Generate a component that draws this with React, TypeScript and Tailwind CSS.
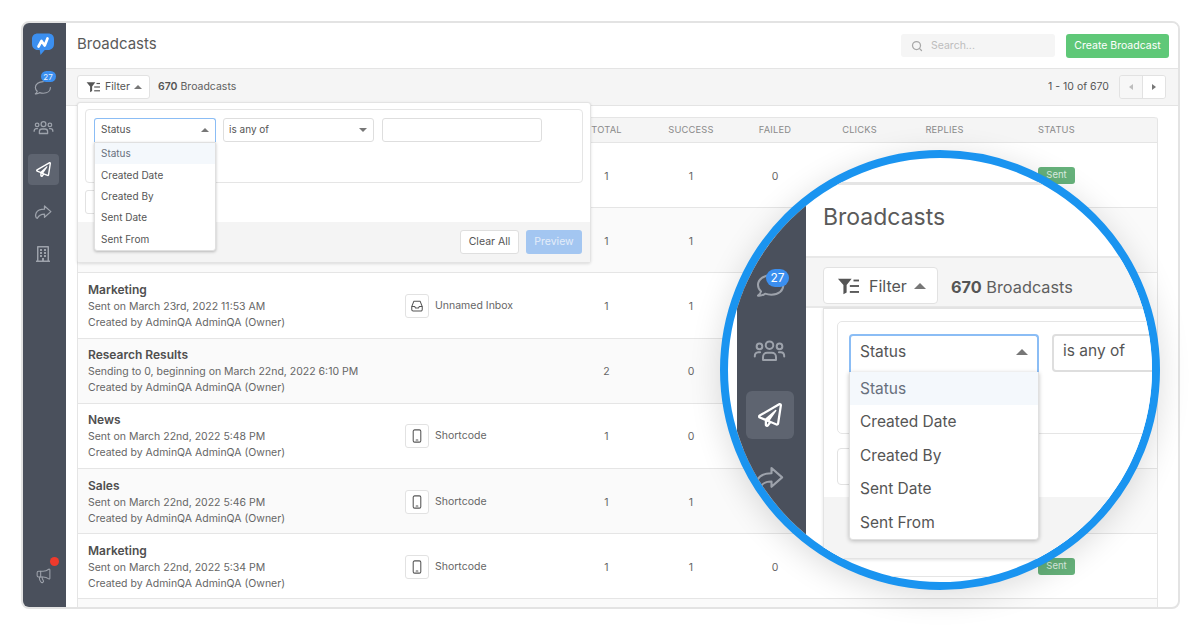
import React from "react";
import { FaRegPaperPlane, FaRegBuilding } from "react-icons/fa";
import { Megaphone, Search } from "lucide-react";

type P = { s: number; c?: string };

const Logo = ({ s }: P) => (
  <svg width={s} height={s} viewBox="0 0 24 24">
    <path d="M7 1.500h10c3.800 0 6 2.200 6 5.500v5c0 3.600-2.400 6-6 6h-3.200L9.500 23l-.8-5H7c-3.600 0-6-2.400-6-6V7c0-3.300 2.200-5.500 6-5.500z" fill="#3b8ff0" />
    <path d="M7.500 14.500L10.500 9l3.200 4.500L16.500 6.500" fill="none" stroke="#fff" strokeWidth="2.700" strokeLinecap="round" strokeLinejoin="round" />
  </svg>
);
const Chat = ({ s, c = "#9da2ab" }: P) => (
  <svg width={s} height={s} viewBox="0 0 24 24" fill="none" stroke={c} strokeWidth="1.500" strokeLinecap="round" strokeLinejoin="round">
    <path d="M13 4.500C7.500 4.500 3 7.800 3 12c0 1.900.9 3.500 2.300 4.800-.3 1.300-1.200 2.500-2.300 3.200 2 .2 4-.4 5.300-1.500 1.400.5 3 .8 4.700.8 5.500 0 9-3 9-7.300" />
  </svg>
);
const Users = ({ s, c = "#9da2ab" }: P) => (
  <svg width={s} height={s} viewBox="0 0 28 24" fill="none" stroke={c} strokeWidth="1.700" strokeLinecap="round" strokeLinejoin="round">
    <circle cx="14" cy="7.500" r="3.200" />
    <circle cx="5.500" cy="8.500" r="2.400" />
    <circle cx="22.500" cy="8.500" r="2.400" />
    <path d="M8.500 20v-2.500c0-2 1.500-3.500 3.500-3.500h4c2 0 3.500 1.500 3.500 3.500V20z" />
    <path d="M6 13.500H4.500C2.500 13.500 1.500 15 1.500 17M22 13.500h1.500c2 0 3 1.500 3 3.500" />
  </svg>
);
const Share = ({ s, c = "#9da2ab" }: P) => (
  <svg width={s} height={s} viewBox="0 0 24 24" fill="none" stroke={c} strokeWidth="1.700" strokeLinecap="round" strokeLinejoin="round">
    <path d="M14 4l8.500 7.500L14 19v-4.200c-4.500 0-7.500 1-9.500 5.700C2 20 1.500 16.500 3 13c1.800-3.500 6-4.800 11-4.800z" />
  </svg>
);
const FilterIcon = ({ s, c = "#555" }: P) => (
  <svg width={s} height={s} viewBox="0 0 24 20" fill={c}>
    <path d="M1 2h15l-5.500 7v8L7 19V9z" />
    <rect x="18" y="3" width="6" height="2" />
    <rect x="14" y="9" width="10" height="2" />
    <rect x="14" y="15.500" width="10" height="2" />
  </svg>
);
const Inbox = ({ s }: P) => (
  <svg width={s} height={s} viewBox="0 0 24 24" fill="none" stroke="#555" strokeWidth="1.800" strokeLinejoin="round">
    <path d="M6.500 4h11L21 13v5a2.500 2.500 0 0 1-2.500 2.500h-13A2.500 2.500 0 0 1 3 18v-5z" />
    <path d="M3 13h5l1.500 2.500h5L16 13h5" />
  </svg>
);
const Mobile = ({ s }: P) => (
  <svg width={s} height={s} viewBox="0 0 24 24" fill="none" stroke="#555" strokeWidth="1.800">
    <rect x="5.500" y="1.500" width="13" height="21" rx="2.500" />
    <path d="M10.500 19h3" strokeLinecap="round" />
  </svg>
);
const Up = ({ w = "border-x-[4px] border-b-[4px]" }: { w?: string }) => (
  <span className={`inline-block w-0 h-0 border-x-transparent border-b-[#777777] ${w}`} />
);
const Down = () => (
  <span className="inline-block w-0 h-0 border-x-[4px] border-x-transparent border-t-[4px] border-t-[#777777]" />
);

type Row = { name: string; l1: string; l2: string; ch?: "inbox" | "mobile"; chName?: string; t: string; s: string; f?: string; sent?: boolean };
const by = "Created by AdminQA AdminQA (Owner)";
const rows: Row[] = [
  { name: "", l1: "", l2: "", t: "1", s: "1", f: "0", sent: true },
  { name: "", l1: "", l2: "", t: "1", s: "1" },
  { name: "Marketing", l1: "Sent on March 23rd, 2022 11:53 AM", l2: by, ch: "inbox", chName: "Unnamed Inbox", t: "1", s: "1" },
  { name: "Research Results", l1: "Sending to 0, beginning on March 22nd, 2022 6:10 PM", l2: by, t: "2", s: "0" },
  { name: "News", l1: "Sent on March 22nd, 2022 5:48 PM", l2: by, ch: "mobile", chName: "Shortcode", t: "1", s: "0" },
  { name: "Sales", l1: "Sent on March 22nd, 2022 5:46 PM", l2: by, ch: "mobile", chName: "Shortcode", t: "1", s: "1" },
  { name: "Marketing", l1: "Sent on March 22nd, 2022 5:34 PM", l2: by, ch: "mobile", chName: "Shortcode", t: "1", s: "1", f: "0", sent: true },
];
const cols = "grid grid-cols-[317px_169px_85px_84px_84px_85px_85px_1fr] items-center";
const options = ["Status", "Created Date", "Created By", "Sent Date", "Sent From"];

function SmallPanel() {
  return (
    <div className="absolute left-[77px] top-[102px] z-10 w-[514px] h-[161px] bg-white border border-[#e3e3e3] rounded-[3px] shadow-[0_1px_3px_rgba(0,0,0,0.12)] flex flex-col">
      <div className="mx-[7px] mt-[6px] h-[74px] border border-[#e5e5e5] rounded-[4px] pl-[8px] pt-[8px] flex items-start">
        <div className="relative w-[122px] h-[24px] bg-white border border-[#8bbdf5] border-b-0 rounded-t-[3px] flex items-center justify-between pl-[6px] pr-[6px] pb-[2px] text-[10px] text-[#555]">
          Status <Up />
          <div className="absolute left-[-1px] top-[23px] w-[122px] h-[109px] bg-white rounded-b-[3px] border border-[#e0e0e0] shadow-[0_1px_3px_rgba(0,0,0,0.25)] flex flex-col">
            {options.map((o, i) => (
              <div key={o} className={`h-[21.600px] flex items-center pl-[6px] text-[10px] ${i === 0 ? "bg-[#f4f8fc] text-[#68707c]" : "text-[#555]"}`}>{o}</div>
            ))}
          </div>
        </div>
        <div className="ml-[7px] w-[151px] h-[24px] border border-[#dedede] rounded-[3px] flex items-center justify-between pl-[5px] pr-[6px] pb-[1px] text-[10px] text-[#555]">
          is any of <Down />
        </div>
        <div className="ml-[8px] w-[160px] h-[24px] border border-[#dedede] rounded-[3px]" />
      </div>
      <div className="ml-[7px] mt-[7px] w-[40px] h-[24px] border border-[#e2e2e2] rounded-[3px]" />
      <div className="mt-auto h-[40px] bg-[#f4f4f4] flex items-center justify-end gap-[7px] pr-[8px]">
        <div className="h-[24px] w-[59px] bg-white border border-[#dfdfdf] rounded-[3px] flex items-center justify-center text-[10.500px] text-[#555]">Clear All</div>
        <div className="h-[24px] w-[56px] bg-[#a3c6f1] rounded-[3px] flex items-center justify-center text-[10.500px] text-[#e3edf9]">Preview</div>
      </div>
    </div>
  );
}

function Magnifier() {
  return (
    <div className="absolute left-[720px] top-[150px] z-20 w-[440px] h-[440px] rounded-full border-[8px] border-[#1a94f0] bg-white overflow-hidden shadow-[0_6px_32px_rgba(0,0,0,0.14)]">
      <div className="absolute left-[9px] top-[24px] w-[500px] h-[420px] flex border-t-[3px] border-[#e5e5e5]">
        <div className="w-[69px] bg-[#4a505c] flex flex-col items-center shrink-0 pt-[80px]">
          <div className="relative ml-[-3px] h-[40px] flex items-center">
            <Chat s={32} />
            <span className="absolute left-[12px] top-[4px] w-[23px] h-[18px] rounded-full bg-[#3b8ff0] text-white text-[12px] flex items-center justify-center">27</span>
          </div>
          <div className="mt-[25px] ml-[-5px] h-[40px] flex items-center"><Users s={33} /></div>
          <div className="mt-[21px] ml-[-3px] w-[48px] h-[48px] rounded-[6px] bg-[#5e6470] flex items-center justify-center text-white"><FaRegPaperPlane size={24} /></div>
          <div className="mt-[24px] ml-[-5px]"><Share s={30} /></div>
        </div>
        <div className="flex-1 flex flex-col min-w-0 relative">
          <div className="h-[73px] pl-[17px] flex items-center text-[23px] text-[#5a5a5a] pb-[6px] border-b-[2px] border-[#e8e8e8] shrink-0">Broadcasts</div>
          <div className="h-[50px] bg-[#f5f5f5] border-b-[2px] border-[#e8e8e8] pl-[17px] pt-[9px] flex items-start shrink-0">
            <div className="w-[115px] h-[37px] bg-white border border-[#e2e2e2] rounded-[4px] flex items-center pl-[13px] text-[16px] text-[#555]">
              <FilterIcon s={22} />
              <span className="ml-[10px]">Filter</span>
              <Up w="ml-[7px] border-x-[6px] border-b-[6px]" />
            </div>
            <span className="ml-[13px] mt-[8px] text-[16.300px] text-[#5f5f5f]"><b className="font-bold text-[#555]">670</b> Broadcasts</span>
          </div>
          <div className="absolute left-[17px] top-[123px] w-[480px] h-[251px] bg-white border border-[#e3e3e3] shadow-[0_1px_3px_rgba(0,0,0,0.12)]">
            <div className="mt-[12px] ml-[13px] h-[113px] border border-[#e5e5e5] rounded-[5px]" />
            <div className="mt-[14px] ml-[13px] w-[60px] h-[37px] border border-[#e2e2e2] rounded-[4px]" />
            <div className="absolute left-0 right-0 bottom-0 h-[61px] bg-[#f4f4f4]" />
            <div className="absolute left-[25px] top-[25px] w-[190px] h-[39px] bg-white border-[2px] border-[#8bbdf5] border-b-0 rounded-t-[4px] flex items-center justify-between pl-[9px] pr-[9px] pb-[5px] text-[15.500px] text-[#555]">
              Status <Up w="border-x-[6px] border-b-[6px]" />
              <div className="absolute left-[-2px] top-[36px] w-[190px] h-[168px] bg-white rounded-b-[4px] border border-[#e0e0e0] border-t-0 shadow-[0_1px_4px_rgba(0,0,0,0.25)] flex flex-col">
                {options.map((o, i) => (
                  <div key={o} className={`h-[33.500px] flex items-center pl-[10px] text-[15.500px] ${i === 0 ? "bg-[#f4f8fc] text-[#68707c]" : "text-[#555]"}`}>{o}</div>
                ))}
              </div>
            </div>
            <div className="absolute left-[228px] top-[25px] w-[200px] h-[38px] border-[2px] border-[#dedede] rounded-[4px] flex items-center pl-[9px] pb-[4px] text-[15.500px] text-[#555]">is any of</div>
          </div>
          <div className="absolute left-[34px] top-[391px] w-[400px] border-b border-[#e5e5e5]" />
        </div>
      </div>
    </div>
  );
}

export default function App() {
  return (
    <div className="relative w-[1200px] h-[630px] overflow-hidden bg-white p-[21px] [font-family:Inter,sans-serif]">
      <div className="flex w-[1159px] h-[588px] border-2 border-[#e3e3e3] rounded-[8px] overflow-hidden bg-white">
        <aside className="w-[43px] shrink-0 bg-[#4a505c] flex flex-col items-center pr-[3px] pt-[5px] pb-[16px]">
          <div className="w-[31px] h-[31px] flex items-center justify-center"><Logo s={24} /></div>
          <div className="relative mt-[11px] w-[31px] h-[31px] flex items-center justify-center">
            <span className="ml-[-2px] mt-[4px]"><Chat s={19} /></span>
            <span className="absolute left-[13px] top-[1px] w-[15px] h-[11px] rounded-full bg-[#3b8ff0] text-[#e8f1fd] text-[8px] flex items-center justify-center">27</span>
          </div>
          <div className="mt-[11px] w-[31px] h-[31px] flex items-center justify-center"><Users s={21} /></div>
          <div className="mt-[11px] w-[31px] h-[31px] rounded-[4px] bg-[#5e6470] flex items-center justify-center text-white"><FaRegPaperPlane size={15} /></div>
          <div className="mt-[11px] w-[31px] h-[31px] flex items-center justify-center"><Share s={18} /></div>
          <div className="mt-[11px] w-[31px] h-[31px] flex items-center justify-center text-[#9da2ab]"><FaRegBuilding size={16} /></div>
          <div className="relative mt-auto w-[31px] h-[31px] flex items-center justify-center text-[#9da2ab]">
            <Megaphone size={17} strokeWidth={1.500} />
            <span className="absolute right-[0px] top-[-3px] w-[9px] h-[9px] rounded-full bg-[#ee3a2c]" />
          </div>
        </aside>
        <main className="flex-1 min-w-0 flex flex-col">
          <header className="h-[46px] shrink-0 bg-white border-b border-[#e4e4e4] flex items-center pl-[11px] pr-[9px]">
            <h1 className="text-[15px] text-[#5a5a5a] font-normal pb-[2px]">Broadcasts</h1>
            <div className="ml-auto w-[154px] h-[23px] rounded-[3px] bg-[#f5f5f5] flex items-center pl-[10px] text-[10.500px] text-[#bdbdbd]">
              <Search size={12} strokeWidth={2.500} className="text-[#a8a8a8] mr-[8px]" />
              Search...
            </div>
            <div className="ml-[11px] w-[103px] h-[24px] rounded-[3px] bg-[#5fc878] text-white text-[10.500px] flex items-center justify-center">Create Broadcast</div>
          </header>
          <div className="h-[37px] shrink-0 bg-[#f5f5f5] border-b border-[#e4e4e4] flex items-center pl-[11px] pr-[12px]">
            <div className="w-[73px] h-[24px] bg-white border border-[#e2e2e2] rounded-[3px] flex items-center pl-[8px] text-[10.500px] text-[#555]">
              <FilterIcon s={14} />
              <span className="ml-[5px]">Filter</span>
              <span className="ml-[4px] flex"><Up /></span>
            </div>
            <span className="ml-[8px] text-[10.500px] text-[#5f5f5f]"><b className="font-semibold text-[#555]">670</b> Broadcasts</span>
            <span className="ml-auto text-[10.500px] text-[#555]">1 - 10 of 670</span>
            <div className="ml-[10px] w-[47px] h-[24px] flex border border-[#e2e2e2] rounded-[3px] overflow-hidden">
              <div className="flex-1 bg-[#f7f7f7] flex items-center justify-center border-r border-[#e2e2e2]">
                <span className="w-0 h-0 border-y-[3.500px] border-y-transparent border-r-[4px] border-r-[#bdbdbd]" />
              </div>
              <div className="flex-1 bg-white flex items-center justify-center">
                <span className="w-0 h-0 border-y-[3.500px] border-y-transparent border-l-[4px] border-l-[#777777]" />
              </div>
            </div>
          </div>
          <div className="flex-1 min-h-0 overflow-hidden pl-[11px] pr-[20px] pt-[11px]">
            <div className="border-x border-[#e5e5e5] rounded-t-[3px]">
              <div className={`${cols} h-[26px] bg-[#f5f5f5] border-y border-[#e5e5e5] rounded-t-[3px] text-[9.300px] tracking-[0.2px] text-[#8a8a8a]`}>
                <span />
                <span />
                <span className="text-center">TOTAL</span>
                <span className="text-center">SUCCESS</span>
                <span className="text-center">FAILED</span>
                <span className="text-center">CLICKS</span>
                <span className="text-center">REPLIES</span>
                <span className="pl-[51px]">STATUS</span>
              </div>
              {rows.map((r, i) => (
                <div key={i} className={`${cols} h-[65.200px] pt-[3px] border-b border-[#e5e5e5] text-[#666] ${i % 2 === 1 ? "bg-[#fafafa]" : "bg-white"}`}>
                  <div className="pl-[10px] text-[10.500px] leading-[16px] whitespace-nowrap">
                    {r.name && <div className="text-[12px] leading-[14px] mb-[2px] font-semibold text-[#4f4f4f]">{r.name}</div>}
                    <div>{r.l1}</div>
                    <div>{r.l2}</div>
                  </div>
                  <div className="pl-[10px] mt-[-2px] flex items-center gap-[6px] text-[10.500px]">
                    {r.ch && (
                      <span className="w-[24px] h-[24px] bg-white border border-[#e2e2e2] rounded-[3px] flex items-center justify-center">
                        {r.ch === "inbox" ? <Inbox s={14} /> : <Mobile s={14} />}
                      </span>
                    )}
                    {r.chName}
                  </div>
                  <span className="text-center text-[10.500px]">{r.t}</span>
                  <span className="text-center text-[10.500px]">{r.s}</span>
                  <span className="text-center text-[10.500px]">{r.f}</span>
                  <span />
                  <span />
                  <div className="pl-[51px] mt-[-3px] flex">
                    {r.sent && <span className="flex w-[37px] h-[17px] rounded-[3px] bg-[#66b27b] text-[#dff0e4] text-[9.500px] items-center justify-center">Sent</span>}
                  </div>
                </div>
              ))}
              <div className="h-[30px] bg-[#fafafa]" />
            </div>
          </div>
        </main>
      </div>
      <SmallPanel />
      <Magnifier />
    </div>
  );
}
